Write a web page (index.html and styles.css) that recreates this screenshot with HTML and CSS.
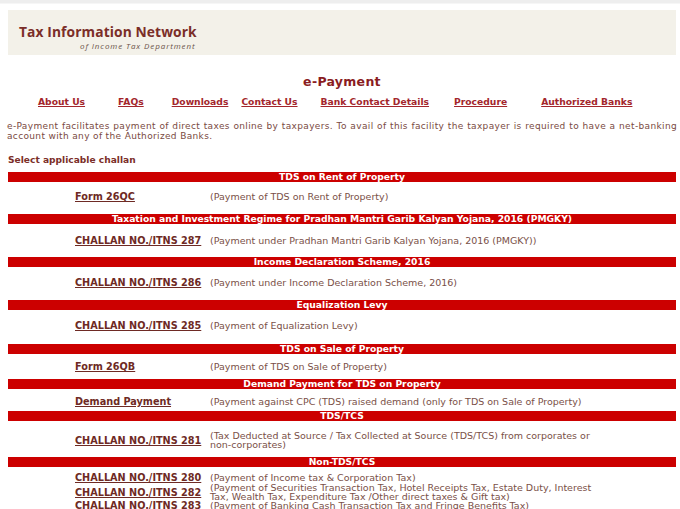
FILE: index.html
```html
<!DOCTYPE html>
<html>
<head>
<meta charset="utf-8">
<link rel="stylesheet" href="styles.css">
</head>
<body>
<div class="topline"></div>
<div class="page">
  <header class="banner">
    <div class="brand">Tax Information Network</div>
    <div class="sub">of Income Tax Department</div>
  </header>
  <h1 class="title">e-Payment</h1>
  <nav class="nav">
    <a href="#" class="n1">About Us</a>
    <a href="#" class="n2">FAQs</a>
    <a href="#" class="n3">Downloads</a>
    <a href="#" class="n4">Contact Us</a>
    <a href="#" class="n5">Bank Contact Details</a>
    <a href="#" class="n6">Procedure</a>
    <a href="#" class="n7">Authorized Banks</a>
  </nav>
  <p class="intro">e-Payment facilitates payment of direct taxes online by taxpayers. To avail of this facility the taxpayer is required to have a net-banking account with any of the Authorized Banks.</p>
  <div class="select">Select applicable challan</div>

  <div class="bar">TDS on Rent of Property</div>
  <div class="row r1"><a href="#">Form 26QC</a><span>(Payment of TDS on Rent of Property)</span></div>

  <div class="bar">Taxation and Investment Regime for Pradhan Mantri Garib Kalyan Yojana, 2016 (PMGKY)</div>
  <div class="row r2"><a href="#">CHALLAN NO./ITNS 287</a><span>(Payment under Pradhan Mantri Garib Kalyan Yojana, 2016 (PMGKY))</span></div>

  <div class="bar">Income Declaration Scheme, 2016</div>
  <div class="row r3"><a href="#">CHALLAN NO./ITNS 286</a><span>(Payment under Income Declaration Scheme, 2016)</span></div>

  <div class="bar">Equalization Levy</div>
  <div class="row r4"><a href="#">CHALLAN NO./ITNS 285</a><span>(Payment of Equalization Levy)</span></div>

  <div class="bar">TDS on Sale of Property</div>
  <div class="row r5"><a href="#">Form 26QB</a><span>(Payment of TDS on Sale of Property)</span></div>

  <div class="bar">Demand Payment for TDS on Property</div>
  <div class="row r6"><a href="#">Demand Payment</a><span>(Payment against CPC (TDS) raised demand (only for TDS on Sale of Property)</span></div>

  <div class="bar">TDS/TCS</div>
  <div class="row r7"><a href="#">CHALLAN NO./ITNS 281</a><span>(Tax Deducted at Source / Tax Collected at Source (TDS/TCS) from corporates or non-corporates)</span></div>

  <div class="bar">Non-TDS/TCS</div>
  <div class="list">
    <div class="item"><a href="#">CHALLAN NO./ITNS 280</a><span>(Payment of Income tax &amp; Corporation Tax)</span></div>
    <div class="item"><a href="#">CHALLAN NO./ITNS 282</a><span>(Payment of Securities Transaction Tax, Hotel Receipts Tax, Estate Duty, Interest Tax, Wealth Tax, Expenditure Tax /Other direct taxes &amp; Gift tax)</span></div>
    <div class="item"><a href="#">CHALLAN NO./ITNS 283</a><span>(Payment of Banking Cash Transaction Tax and Fringe Benefits Tax)</span></div>
  </div>
</div>
</body>
</html>
```

FILE: styles.css
```css
html, body {
  margin: 0;
  padding: 0;
  background: #ffffff;
}
body {
  font-family: "DejaVu Sans", Verdana, sans-serif;
  font-size: 9.5px;
  color: #7a5047;
  overflow: hidden;
}
.topline {
  height: 3px;
  background: #eeeeee;
  border-bottom: 1px solid #f6f6f6;
}
.page {
  padding: 6px 4px 0 8px;
}
.banner {
  background: #f3f1e9;
  height: 45px;
  padding: 15px 0 0 11px;
  box-sizing: border-box;
}
.brand {
  font-family: "Open Sans", "DejaVu Sans", sans-serif;
  font-weight: 700;
  font-size: 13.8px;
  line-height: 14px;
  color: #7b2e28;
  letter-spacing: 0.1px;
}
.sub {
  font-family: "Open Sans", "DejaVu Sans", sans-serif;
  font-style: italic;
  font-size: 8px;
  line-height: 10px;
  color: #6a5148;
  padding-left: 61px;
  margin-top: 2px;
  letter-spacing: 0.9px;
}
.title {
  margin: 20px 0 0;
  text-align: center;
  font-size: 12.5px;
  line-height: 14px;
  font-weight: 700;
  color: #8a1c22;
  letter-spacing: 0.3px;
}
.nav {
  display: flex;
  height: 14px;
  margin-top: 6px;
  font-size: 9.2px;
  font-weight: 700;
}
.nav a {
  color: #a3262c;
  text-decoration: underline;
  line-height: 14px;
  white-space: nowrap;
}
.n1 { margin-left: 30px; }
.n2 { margin-left: 33px; }
.n3 { margin-left: 28px; }
.n4 { margin-left: 13px; }
.n5 { margin-left: 23px; }
.n6 { margin-left: 25px; }
.n7 { margin-left: 34px; }
.intro {
  margin: 13px -1px 0 -1px;
  font-size: 9px;
  line-height: 9.5px;
  color: #7a4a42;
  letter-spacing: 0.35px;
  text-align: justify;
}
.select {
  margin-top: 13px;
  font-weight: 700;
  font-size: 9.1px;
  line-height: 12px;
  color: #7b2e28;
}
.bar {
  background: #cc0000;
  color: #ffffff;
  font-weight: 700;
  font-size: 9.2px;
  line-height: 10px;
  height: 10px;
  text-align: center;
  white-space: nowrap;
}
.select + .bar { margin-top: 6px; }
.row, .item {
  display: grid;
  grid-template-columns: 135px 385px;
  padding-left: 67px;
  align-items: center;
}
.row {
  line-height: 12px;
}
.r1 { padding: 9px 0 11px 67px; }
.r2 { padding: 11px 0 10px 67px; }
.r3 { padding: 10px 0 11px 67px; }
.r4 { padding: 10px 0 12px 67px; }
.r5 { padding: 7px 0 6px 67px; }
.r6 { padding: 7px 0 3px 67px; }
.r7 { padding: 10px 0 8px 67px; line-height: 9px; }
.row a, .item a {
  color: #6e2a24;
  font-weight: 700;
  font-size: 9.7px;
  text-decoration: underline;
  white-space: nowrap;
}
.list {
  padding-top: 6px;
}
.item {
  line-height: 9px;
}
.item:nth-child(2) { padding-top: 1px; }
.item a { line-height: 9px; }
```
